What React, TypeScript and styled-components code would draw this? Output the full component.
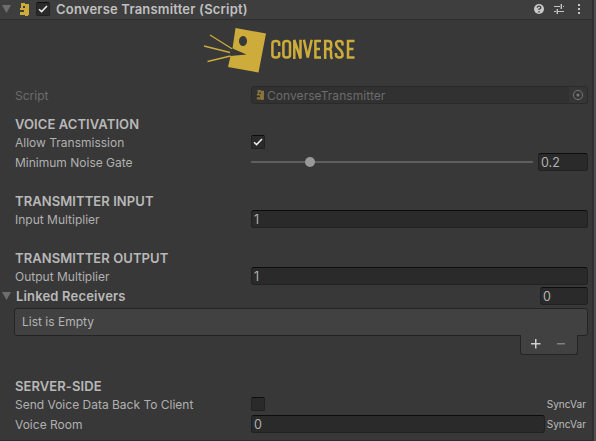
import React from 'react';
import styled, { createGlobalStyle } from 'styled-components';

const GlobalStyle = createGlobalStyle`
  * { box-sizing: border-box; }
  html, body { margin: 0; padding: 0; background: #383838; overflow: hidden; }
  svg { display: block; flex: none; }
`;

const gold = '#cdac3c';

const Panel = styled.div`
  width: 596px;
  height: 441px;
  background: #383838;
  border-right: 2px solid #505050;
  box-shadow: inset -2px 0 0 #303030, inset 0 -1px 0 #2d2d2d;
  color: #b4b4b4;
  font: 400 12px/18px Inter, sans-serif;
  white-space: nowrap;
`;

const TitleBar = styled.header`
  display: flex;
  align-items: center;
  width: 592px;
  height: 20px;
  padding: 0 6px 1px 2px;
  background: #3e3e3e;
  border-bottom: 1px solid #2c2c2c;
`;

const TitleIcon = styled.div`
  margin: 0 7px 0 8px;
`;

const TitleActions = styled.div`
  display: flex;
  gap: 6px;
  margin-left: auto;
`;

const Text = styled.span`
  padding-top: 2px;
  font-size: 12px;
  line-height: 16px;
`;

const BoldText = styled.span<{ $spacing?: number }>`
  font-size: 13px;
  font-weight: 600;
  letter-spacing: ${p => p.$spacing ?? 0.08}px;
`;

const Title = styled(BoldText)`
  margin-left: 6px;
  color: #c0c0c0;
`;

const Banner = styled.div`
  display: flex;
  align-items: center;
  height: 66px;
  padding: 0 0 6px 203px;
`;

const Body = styled.main`
  display: flex;
  flex-direction: column;
  gap: 2px;
  padding-right: 6px;
`;

const Row = styled.div<{ $dim?: boolean }>`
  display: grid;
  grid-template-columns: 236px 1fr;
  grid-template-rows: 18px;
  align-items: center;
  height: 18px;
  padding-left: 15px;
  color: ${p => (p.$dim ? '#6c6c6c' : '#b0b0b0')};
`;

const Heading = styled.h2<{ $top: number }>`
  height: 16px;
  margin: ${p => p.$top}px 0 -2px 15px;
  font: inherit;
  line-height: 14px;
  color: #b8b8b8;
`;

const Controls = styled.div`
  display: flex;
  align-items: center;
  height: 18px;
`;

const Field = styled.div<{ $width?: number; $disabled?: boolean }>`
  display: flex;
  align-items: center;
  width: ${p => (p.$width ? `${p.$width}px` : '100%')};
  height: 18px;
  padding-left: ${p => (p.$disabled ? 4 : 2)}px;
  overflow: hidden;
  border: 1px solid ${p => (p.$disabled ? '#2a2a2a' : '#212121')};
  border-top-color: ${p => (p.$disabled ? '#2a2a2a' : '#0d0d0d')};
  border-radius: 3px;
  background: ${p => (p.$disabled ? '#313131' : '#2a2a2a')};
`;

const ValueText = styled(Text)`
  font-size: 12.5px;
`;

const ObjectName = styled(Text)`
  margin-left: 3px;
  letter-spacing: 0.05px;
`;

const Picker = styled.div`
  display: flex;
  align-items: center;
  justify-content: center;
  width: 18px;
  height: 16px;
  margin-left: auto;
  background: #363636;
`;

const Box = styled.div`
  display: flex;
  align-items: center;
  justify-content: center;
  width: 14px;
  height: 14px;
  border: 1px solid #212121;
  border-top-color: #0d0d0d;
  border-radius: 2px;
  background: #2a2a2a;
`;

const Track = styled.div`
  display: flex;
  align-items: center;
  width: 282px;
  height: 2px;
  margin-right: 5px;
  padding-left: 54px;
  background: #5e5e5e;
`;

const Thumb = styled.div`
  width: 10px;
  height: 10px;
  border-radius: 50%;
  background: #999;
`;

const Foldout = styled.div`
  display: flex;
  align-items: center;
  height: 18px;
  padding-left: 2px;
`;

const FoldoutLabel = styled(BoldText)`
  flex: 1;
  margin-left: 5px;
  color: #bababa;
`;

const List = styled.div`
  height: 28px;
  margin: 1px 0 0 14px;
  padding-left: 7px;
  border: 1px solid #242424;
  border-radius: 3px;
  background: #414141;
  line-height: 26px;
`;

const ListFooter = styled.div`
  display: flex;
  align-items: center;
  gap: 15px;
  position: relative;
  width: 58px;
  height: 20px;
  margin: -3px 10px 0 auto;
  padding: 0 0 2px 9px;
  border: 1px solid #242424;
  border-top: 0;
  border-radius: 0 0 3px 3px;
  background: #414141;
`;

const SyncTag = styled.span`
  margin-left: auto;
  padding-right: 2px;
  font-size: 10.1px;
  color: #bcbcbc;
`;

const Check = ({ on = true }: { on?: boolean }) => (
  <Box>
    {on && (
      <svg width="10" height="10" viewBox="0 0 10 10">
        <path d="M1 5.2 3.6 7.6 9 2" fill="none" stroke="#eee" strokeWidth="1.5" />
      </svg>
    )}
  </Box>
);

const Arrow = () => (
  <svg width="9" height="8" viewBox="0 0 9 8">
    <path d="M0 0H9L4.5 8Z" fill="#6e6e6e" />
  </svg>
);

const Bird = ({ size, color = gold }: { size: number; color?: string }) => (
  <svg width={size} height={size * 1.3} viewBox="0 0 10 13">
    <path
      fill={color}
      fillRule="evenodd"
      d="M2 0H6V1H10V12H9V13H6V12H1V9H5V7H1V5H2ZM4 3V5H6V3Z"
    />
  </svg>
);

const Logo = () => (
  <svg width="154" height="48" viewBox="203 26 154 48">
    <path
      fill={gold}
      fillRule="evenodd"
      d="M235.5 28 266 33.5 258.5 72.5 228 67 230.5 56 246.5 54.5 232.5 48.5ZM243 36C240.7 36 239 38.2 239 41S240.7 46 243 46 247 43.8 247 41 245.3 36 243 36Z"
    />
    <path d="M210 35 232 48.7M204 46 230 52.5M207.5 61.5 230.5 56" fill="none" stroke={gold} strokeWidth="1.3" />
    <g fill="none" stroke={gold} strokeWidth="2.5">
      <path d="M279.2 46V43.5Q279.2 41 275.8 41T272.4 43.5V55Q272.4 57.5 275.8 57.5T279.2 55V52" />
      <path d="M283.4 43.5Q283.4 41 286.7 41T290 43.5V55Q290 57.5 286.7 57.5T283.4 55Z" />
      <path d="M294.3 59V40L300.5 58.5V39.7" />
      <path d="M303.9 39.7 307.8 57.5 311.7 39.7" />
      <path d="M321 41H315.4V57.5H321M315.4 49H320" />
      <path d="M325.2 59V41H328.2Q331.2 41 331.2 44V46Q331.2 49 328.2 49H325.2M328.2 49Q331 49 331 52V56.5L332 59" />
      <path d="M342.5 45.5V43.5Q342.5 41 339.3 41T336.1 43.5Q336.1 46.5 339.3 49T342.6 55Q342.6 57.5 339.3 57.5T336 55V53" />
      <path d="M354.5 41H348V57.5H354.5M348 49H353.5" />
    </g>
  </svg>
);

const HelpIcon = () => (
  <svg width="14" height="14" viewBox="0 0 14 14">
    <circle cx="7" cy="7" r="5" fill="#c8c8c8" />
    <path d="M5.2 5.8Q5.2 4.2 7 4.2T8.8 5.7Q8.8 6.7 7 7.2V8M7 9V10.4" fill="none" stroke="#3e3e3e" strokeWidth="1.3" />
  </svg>
);

const PresetIcon = () => (
  <svg width="14" height="14" viewBox="0 0 14 14" shapeRendering="crispEdges">
    <path d="M2 4H9V5H2ZM9 2H10V7H9ZM11 4H12V5H11ZM2 9H4V10H2ZM5 7H6V12H5ZM6 9H12V10H6Z" fill="#c4c4c4" />
    <path d="M8 2H9V7H8ZM4 7H5V12H4Z" fill="#777" />
  </svg>
);

const MenuIcon = () => (
  <svg width="14" height="14" viewBox="0 0 14 14">
    <path d="M6 2H8V4H6ZM6 6H8V8H6ZM6 10H8V12H6Z" fill="#c4c4c4" />
  </svg>
);

const Target = () => (
  <svg width="12" height="12" viewBox="0 0 12 12">
    <circle cx="6" cy="6" r="4.6" fill="none" stroke="#777" strokeWidth="1" />
    <circle cx="6" cy="6" r="1.6" fill="#777" />
  </svg>
);

export default function App() {
  return (
    <Panel>
      <GlobalStyle />
      <TitleBar>
        <Arrow />
        <TitleIcon><Bird size={10} /></TitleIcon>
        <Check />
        <Title $spacing={0.2}>Converse Transmitter (Script)</Title>
        <TitleActions><HelpIcon /><PresetIcon /><MenuIcon /></TitleActions>
      </TitleBar>
      <Banner><Logo /></Banner>
      <Body>
        <Row $dim>
          <Text>Script</Text>
          <Field $disabled>
            <Bird size={8} color="#87743a" />
            <ObjectName>ConverseTransmitter</ObjectName>
            <Picker><Target /></Picker>
          </Field>
        </Row>
        <Heading $top={11}><BoldText>VOICE ACTIVATION</BoldText></Heading>
        <Row>
          <Text>Allow Transmission</Text>
          <Check />
        </Row>
        <Row>
          <Text>Minimum Noise Gate</Text>
          <Controls>
            <Track><Thumb /></Track>
            <Field $width={50}><ValueText>0.2</ValueText></Field>
          </Controls>
        </Row>
        <Heading $top={21}><BoldText>TRANSMITTER INPUT</BoldText></Heading>
        <Row>
          <Text>Input Multiplier</Text>
          <Field><ValueText>1</ValueText></Field>
        </Row>
        <Heading $top={21}><BoldText>TRANSMITTER OUTPUT</BoldText></Heading>
        <Row>
          <Text>Output Multiplier</Text>
          <Field><ValueText>1</ValueText></Field>
        </Row>
        <Foldout>
          <Arrow />
          <FoldoutLabel $spacing={0.17}>Linked Receivers</FoldoutLabel>
          <Field $width={48}><ValueText>0</ValueText></Field>
        </Foldout>
        <List><Text>List is Empty</Text></List>
        <ListFooter>
          <svg width="11" height="11" viewBox="0 0 11 11">
            <path d="M5 1H6.5V5H10.5V6.5H6.5V10.5H5V6.5H1V5H5Z" fill="#d0d0d0" />
          </svg>
          <svg width="9" height="11" viewBox="0 0 9 11">
            <path d="M1 5H9V6.5H1Z" fill="#808080" />
          </svg>
        </ListFooter>
        <Heading $top={22}><BoldText>SERVER-SIDE</BoldText></Heading>
        <Row>
          <Text>Send Voice Data Back To Client</Text>
          <Controls><Check on={false} /><SyncTag>SyncVar</SyncTag></Controls>
        </Row>
        <Row>
          <Text>Voice Room</Text>
          <Controls><Field $width={294}><ValueText>0</ValueText></Field><SyncTag>SyncVar</SyncTag></Controls>
        </Row>
      </Body>
    </Panel>
  );
}
